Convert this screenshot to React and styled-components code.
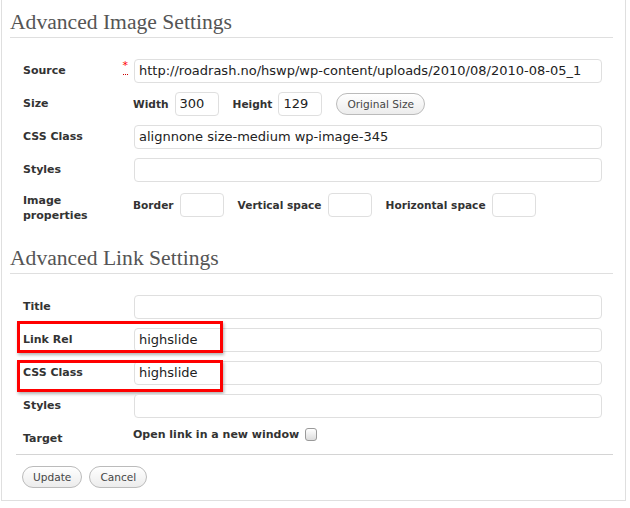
import React from 'react';
import styled, { createGlobalStyle } from 'styled-components';

const GlobalStyle = createGlobalStyle`
  html, body {
    margin: 0;
    padding: 0;
    background: #ffffff;
  }
  body {
    font-family: "DejaVu Sans", "Liberation Sans", sans-serif;
    color: #333333;
  }
`;

const Panel = styled.div`
  box-sizing: border-box;
  width: 625px;
  margin-left: 1px;
  padding: 9px 12px 0 8px;
  border: 1px solid #dfdfdf;
  border-top: none;
`;

const SectionTitle = styled.h2`
  margin: ${props => (props.$first ? '0' : '21px')} 0 0 0;
  padding: 0 0 2px 0;
  font-family: "Liberation Serif", "DejaVu Serif", serif;
  font-weight: normal;
  font-size: 21.6px;
  line-height: 26px;
  color: #555555;
  border-bottom: 1px solid #dfdfdf;
`;

const Form = styled.div`
  padding: 16px 11px 0 13px;
`;

const Row = styled.div`
  position: relative;
  display: grid;
  grid-template-columns: 111px 1fr;
  align-items: center;
  min-height: ${props => props.$height || 33}px;
`;

const Label = styled.div`
  display: flex;
  justify-content: space-between;
  align-items: flex-start;
  font-size: 11px;
  font-weight: bold;
  line-height: 15px;
  color: #333333;
  align-self: ${props => (props.$top ? 'start' : 'center')};
  padding-top: ${props => (props.$top ? '7px' : '0')};
`;

const Required = styled.abbr`
  color: #ff0000;
  font-size: 11px;
  font-weight: normal;
  line-height: 10px;
  margin: -2px 6px 0 0;
  text-decoration: none;
  border-bottom: 1px dotted #cc0000;
  padding-bottom: 3px;
`;

const TextInput = styled.input`
  box-sizing: border-box;
  width: ${props => (props.$small ? '44px' : '100%')};
  height: 24px;
  padding: 0 4px;
  border: 1px solid #dfdfdf;
  border-radius: 4px;
  background: #ffffff;
  font-family: "DejaVu Sans", sans-serif;
  font-size: 13px;
  color: #222222;
  outline: none;
`;

const Inline = styled.div`
  display: flex;
  align-items: center;
  gap: 14px;
  margin-left: -1px;
  align-self: ${props => (props.$top ? 'start' : 'center')};
  padding-top: ${props => (props.$top ? '6px' : '0')};
`;

const Field = styled.label`
  display: flex;
  align-items: center;
  gap: 6px;
  font-size: ${props => (props.$wide ? '11px' : '10.6px')};
  font-weight: bold;
  color: #333333;
`;

const PillButton = styled.button`
  height: 22px;
  padding: 0 10px;
  border: 1px solid #bbbbbb;
  border-radius: 11px;
  background: linear-gradient(#ffffff, #ececec);
  font-family: "DejaVu Sans", sans-serif;
  font-size: 10.6px;
  color: #464646;
  cursor: pointer;
`;

const Checkbox = styled.input`
  appearance: none;
  margin: 0;
  width: 12px;
  height: 13px;
  border: 1px solid #9a9a9a;
  border-radius: 3px;
  background: linear-gradient(#ffffff, #dcdcdc);
`;

const Highlight = styled.div`
  position: absolute;
  left: -6px;
  top: ${props => props.$top}px;
  width: 206px;
  height: 32px;
  box-sizing: border-box;
  border: 3px solid #ff0000;
  box-shadow: 1px 2px 3px rgba(0, 0, 0, 0.3);
  pointer-events: none;
`;

const Footer = styled.div`
  display: flex;
  gap: 7px;
  margin-left: 6px;
  padding: 11px 0 12px 6px;
  border-top: 1px solid #d4d4d4;
`;

export default function App() {
  return (
    <>
      <GlobalStyle />
      <Panel>
        <SectionTitle $first>Advanced Image Settings</SectionTitle>
        <Form>
          <Row>
            <Label>
              Source
              <Required title="required">*</Required>
            </Label>
            <TextInput defaultValue="http://roadrash.no/hswp/wp-content/uploads/2010/08/2010-08-05_1" />
          </Row>
          <Row>
            <Label>Size</Label>
            <Inline>
              <Field>
                Width <TextInput $small defaultValue="300" />
              </Field>
              <Field>
                Height <TextInput $small defaultValue="129" />
              </Field>
              <PillButton>Original Size</PillButton>
            </Inline>
          </Row>
          <Row>
            <Label>CSS Class</Label>
            <TextInput defaultValue="alignnone size-medium wp-image-345" />
          </Row>
          <Row>
            <Label>Styles</Label>
            <TextInput defaultValue="" />
          </Row>
          <Row $height={38}>
            <Label $top>
              Image
              <br />
              properties
            </Label>
            <Inline>
              <Field>
                Border <TextInput $small />
              </Field>
              <Field>
                Vertical space <TextInput $small />
              </Field>
              <Field>
                Horizontal space <TextInput $small />
              </Field>
            </Inline>
          </Row>
        </Form>

        <SectionTitle>Advanced Link Settings</SectionTitle>
        <Form>
          <Row>
            <Label>Title</Label>
            <TextInput />
          </Row>
          <Row>
            <Label>Link Rel</Label>
            <TextInput defaultValue="highslide" />
            <Highlight $top={-2} />
          </Row>
          <Row>
            <Label>CSS Class</Label>
            <TextInput defaultValue="highslide" />
            <Highlight $top={4} />
          </Row>
          <Row>
            <Label>Styles</Label>
            <TextInput />
          </Row>
          <Row $height={32}>
            <Label>Target</Label>
            <Inline $top>
              <Field $wide>
                Open link in a new window <Checkbox type="checkbox" />
              </Field>
            </Inline>
          </Row>
        </Form>
        <Footer>
          <PillButton>Update</PillButton>
          <PillButton>Cancel</PillButton>
        </Footer>
      </Panel>
    </>
  );
}
